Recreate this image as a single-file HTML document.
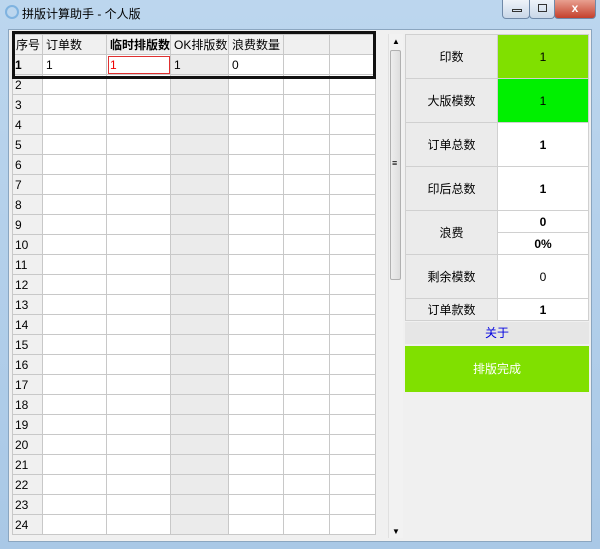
<!DOCTYPE html>
<html><head><meta charset="utf-8"><style>
*{margin:0;padding:0;box-sizing:border-box}
body{width:600px;height:549px;overflow:hidden;background:linear-gradient(#bcd6ee,#a9c8e6);font-family:"Liberation Sans","Noto Sans CJK SC",sans-serif;font-size:12px;color:#000;position:relative}
.abs{position:absolute}
.title{left:22px;top:5px;font-size:12px;color:#000}
.client{left:8px;top:29px;width:584px;height:513px;background:#f0f0f0;border:1px solid #8ba6c0}
table.g{border-collapse:collapse;position:absolute;left:12px;top:34px;background:#fff;table-layout:fixed}
table.g td{border:1px solid #c8c8c8;height:20px;padding:0 0 0 3px;font-size:12px;white-space:nowrap;overflow:hidden}
table.g td.h{background:#f0f0f0;padding-left:2px}
table.g td.ok{background:#ebebeb}
table.g tr:first-child td{background:#f0f0f0}
.sb{left:388px;top:34px;width:15px;height:504px;background:#f2f2f2;border-left:1px solid #e0e0e0}
.thumb{left:390px;top:50px;width:11px;height:230px;background:linear-gradient(90deg,#eee,#ddd);border:1px solid #b0b0b0;border-radius:2px}
table.r{border-collapse:collapse;position:absolute;left:405px;top:34px;width:184px;table-layout:fixed;border:1px solid #999}
table.r td{border:1px solid #d0d0d0;text-align:center;font-size:12px}
table.r td.l{background:#ebebeb;width:92px}
table.r td.v{background:#fff;font-weight:bold}
.btn{position:absolute;left:405px;width:184px;text-align:center}
.wb{top:0;height:19px;border:1px solid #6f89a8;border-top:none;border-radius:0 0 4px 4px}
</style></head><body>
<div class="abs" style="left:5px;top:5px;width:14px;height:14px;border:2px solid #7fb3e0;border-radius:50%"></div>
<div class="abs title">拼版计算助手 - 个人版</div>
<div class="abs wb" style="left:502px;width:28px;background:linear-gradient(#eef3f9,#c9d7e8)"><div class="abs" style="left:9px;top:9px;width:10px;height:3px;border:1px solid #333"></div></div>
<div class="abs wb" style="left:529px;width:26px;background:linear-gradient(#eef3f9,#c9d7e8)"><div class="abs" style="left:8px;top:4px;width:9px;height:8px;border:1px solid #333"></div></div>
<div class="abs wb" style="left:554px;width:42px;background:linear-gradient(#e8a090,#c4402c);color:#fff;font-weight:bold;text-align:center;line-height:16px">x</div>
<div class="abs client"></div>
<table class="g">
<colgroup><col style="width:30px"><col style="width:64px"><col style="width:64px"><col style="width:58px"><col style="width:55px"><col style="width:46px"><col style="width:46px"></colgroup>
<tr><td>序号</td><td>订单数</td><td style="font-weight:bold">临时排版数</td><td>OK排版数</td><td>浪费数量</td><td></td><td></td></tr>
<tr><td class="h" style="font-weight:bold">1</td><td>1</td><td style="color:#e00;outline:1px solid #e03030;outline-offset:-2px">1</td><td class="ok">1</td><td>0</td><td></td><td></td></tr>
<tr><td class="h">2</td><td></td><td></td><td class="ok"></td><td></td><td></td><td></td></tr>
<tr><td class="h">3</td><td></td><td></td><td class="ok"></td><td></td><td></td><td></td></tr>
<tr><td class="h">4</td><td></td><td></td><td class="ok"></td><td></td><td></td><td></td></tr>
<tr><td class="h">5</td><td></td><td></td><td class="ok"></td><td></td><td></td><td></td></tr>
<tr><td class="h">6</td><td></td><td></td><td class="ok"></td><td></td><td></td><td></td></tr>
<tr><td class="h">7</td><td></td><td></td><td class="ok"></td><td></td><td></td><td></td></tr>
<tr><td class="h">8</td><td></td><td></td><td class="ok"></td><td></td><td></td><td></td></tr>
<tr><td class="h">9</td><td></td><td></td><td class="ok"></td><td></td><td></td><td></td></tr>
<tr><td class="h">10</td><td></td><td></td><td class="ok"></td><td></td><td></td><td></td></tr>
<tr><td class="h">11</td><td></td><td></td><td class="ok"></td><td></td><td></td><td></td></tr>
<tr><td class="h">12</td><td></td><td></td><td class="ok"></td><td></td><td></td><td></td></tr>
<tr><td class="h">13</td><td></td><td></td><td class="ok"></td><td></td><td></td><td></td></tr>
<tr><td class="h">14</td><td></td><td></td><td class="ok"></td><td></td><td></td><td></td></tr>
<tr><td class="h">15</td><td></td><td></td><td class="ok"></td><td></td><td></td><td></td></tr>
<tr><td class="h">16</td><td></td><td></td><td class="ok"></td><td></td><td></td><td></td></tr>
<tr><td class="h">17</td><td></td><td></td><td class="ok"></td><td></td><td></td><td></td></tr>
<tr><td class="h">18</td><td></td><td></td><td class="ok"></td><td></td><td></td><td></td></tr>
<tr><td class="h">19</td><td></td><td></td><td class="ok"></td><td></td><td></td><td></td></tr>
<tr><td class="h">20</td><td></td><td></td><td class="ok"></td><td></td><td></td><td></td></tr>
<tr><td class="h">21</td><td></td><td></td><td class="ok"></td><td></td><td></td><td></td></tr>
<tr><td class="h">22</td><td></td><td></td><td class="ok"></td><td></td><td></td><td></td></tr>
<tr><td class="h">23</td><td></td><td></td><td class="ok"></td><td></td><td></td><td></td></tr>
<tr><td class="h">24</td><td></td><td></td><td class="ok"></td><td></td><td></td><td></td></tr>
</table>
<div class="abs" style="left:12px;top:31px;width:364px;height:48px;border:3px solid #111"></div>
<div class="abs sb"></div>
<div class="abs thumb"></div>
<div class="abs" style="left:392px;top:37px;font-size:8px">▲</div>
<div class="abs" style="left:392px;top:527px;font-size:8px">▼</div>
<div class="abs" style="left:392px;top:158px;font-size:9px">≡</div>
<table class="r">
<tr style="height:44px"><td class="l">印数</td><td style="background:#80e000">1</td></tr>
<tr style="height:44px"><td class="l">大版模数</td><td style="background:#00f000">1</td></tr>
<tr style="height:44px"><td class="l">订单总数</td><td class="v">1</td></tr>
<tr style="height:44px"><td class="l">印后总数</td><td class="v">1</td></tr>
<tr style="height:22px"><td class="l" rowspan="2">浪费</td><td class="v">0</td></tr>
<tr style="height:22px"><td class="v">0%</td></tr>
<tr style="height:44px"><td class="l">剩余模数</td><td style="background:#fff">0</td></tr>
<tr style="height:22px"><td class="l">订单款数</td><td class="v">1</td></tr>
</table>
<div class="btn" style="top:322px;height:22px;line-height:22px;background:#e6e6e6;color:#0000e0">关于</div>
<div class="btn" style="top:346px;height:46px;line-height:46px;background:#80e000;color:#fff">排版完成</div>
</body></html>
